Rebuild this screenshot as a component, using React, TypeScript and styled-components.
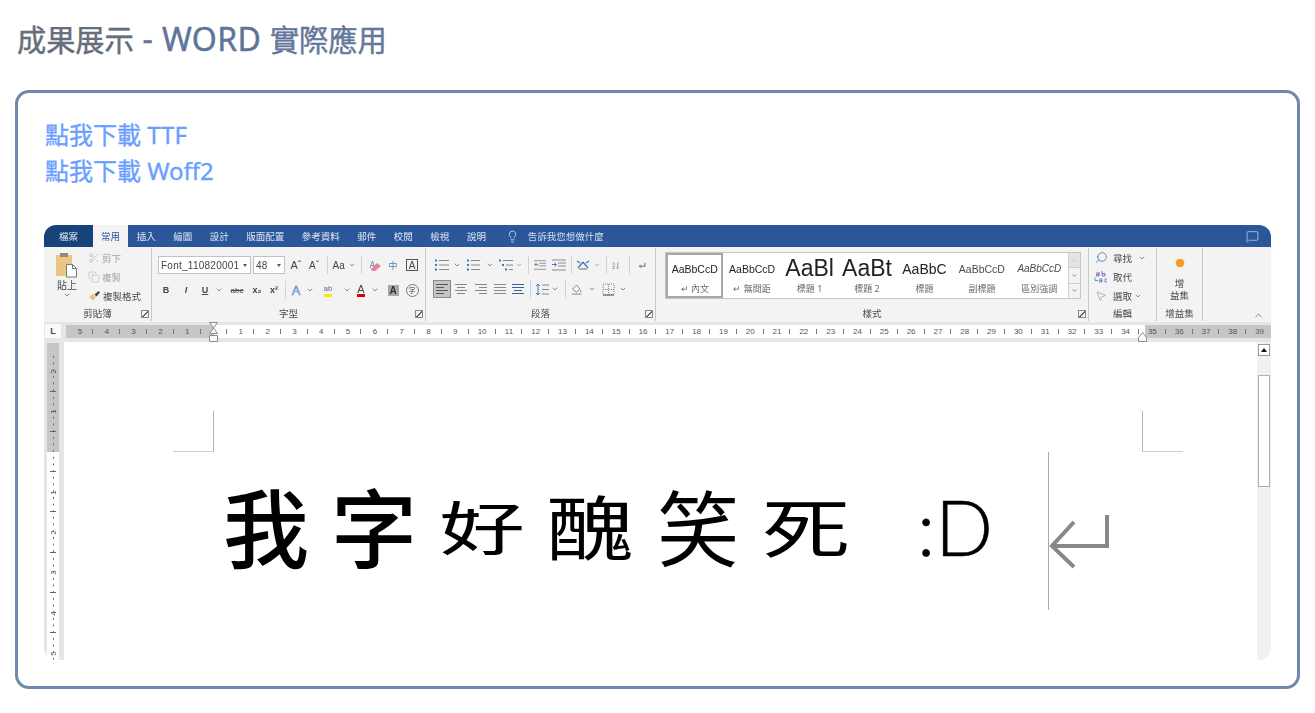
import React from 'react';
import styled, { createGlobalStyle } from 'styled-components';
import { ChevronDown, ChevronUp, Lightbulb, MessageSquare, Scissors, Copy, Search, MousePointer2 } from 'lucide-react';

const cjk = '"Noto Sans", "Noto Sans CJK TC", sans-serif';

const GlobalStyle = createGlobalStyle`
  html, body {
    margin: 0;
    background: #fff;
    font-family: ${cjk};
  }
`;

const Page = styled.div`
  padding: 20px 15px 0;
  box-sizing: border-box;
  height: 713px;
  overflow: hidden;
`;

const Heading = styled.h2`
  margin: 0 0 30px 2px;
  height: 40px;
  font-size: 29.2px;
  line-height: 38px;
  font-weight: 400;
  white-space: nowrap;
  -webkit-text-stroke: 0.45px currentColor;
`;

const HeadingPart = styled.span<{ $color: string; $latin?: boolean }>`
  color: ${p => p.$color};
  font-size: ${p => (p.$latin ? '32px' : 'inherit')};
  letter-spacing: ${p => (p.$latin ? '0.4px' : '0')};
`;

const Card = styled.section`
  box-sizing: border-box;
  height: 599px;
  border: 3px solid #7088ab;
  border-radius: 14px;
  padding: 24px 26px 26px;
  display: flex;
  flex-direction: column;
`;

const DownloadLink = styled.a`
  display: block;
  margin-left: 1px;
  font-size: 24px;
  line-height: 36px;
  font-weight: 400;
  color: #6a9eff;
  -webkit-text-stroke: 0.35px currentColor;
  text-decoration: none;
`;

const Shot = styled.div`
  margin-top: 36px;
  height: 435px;
  border-radius: 12px;
  overflow: hidden;
  display: flex;
  flex-direction: column;
  font-size: 9.5px;
  color: #4a4a4a;
  background: #fff;
`;

const TabBar = styled.div`
  flex: 0 0 22px;
  display: flex;
  align-items: center;
  background: #2b579a;
  color: #dfe7f2;
  white-space: nowrap;
  filter: blur(0.25px);
`;

const Tab = styled.span<{ $kind?: 'file' | 'active' }>`
  height: 100%;
  display: flex;
  align-items: center;
  justify-content: center;
  padding: ${p => (p.$kind ? '0' : '0 8.75px')};
  box-sizing: border-box;
  flex: 0 0 auto;
  width: ${p => (p.$kind === 'file' ? '49px' : p.$kind === 'active' ? '35px' : 'auto')};
  background: ${p => (p.$kind === 'file' ? '#17437b' : p.$kind === 'active' ? '#f3f3f3' : 'transparent')};
  color: ${p => (p.$kind === 'active' ? '#2b579a' : 'inherit')};
`;

const TellMe = styled.span`
  display: flex;
  align-items: center;
  gap: 9px;
  margin-left: 11px;
  color: #d5dfee;
`;

const CommentSlot = styled.span`
  margin-left: auto;
  margin-right: 12px;
  display: flex;
`;

const Ribbon = styled.div`
  flex: 0 0 75px;
  box-sizing: border-box;
  padding-top: 1px;
  display: flex;
  background: #f3f3f3;
  filter: blur(0.25px);
`;

const Group = styled.div<{ $w: number }>`
  flex: 0 0 ${p => p.$w}px;
  box-sizing: border-box;
  height: 73px;
  border-right: 1px solid #c8c8c8;
  display: flex;
  flex-direction: column;
`;

const GroupBody = styled.div<{ $pad?: number; $top?: number; $col?: boolean }>`
  flex: 0 0 59px;
  box-sizing: border-box;
  padding: ${p => p.$top ?? 0}px 0 0 ${p => p.$pad ?? 0}px;
  display: flex;
  flex-direction: ${p => (p.$col ? 'column' : 'row')};
`;

const GroupLabel = styled.div`
  flex: 0 0 14px;
  display: grid;
  grid-template-columns: 1fr auto 1fr;
  align-items: center;
  line-height: 14px;
`;

const Launcher = styled.span`
  grid-column: 3;
  justify-self: end;
  margin-right: 2px;
  width: 6px;
  height: 6px;
  border: 1px solid #8a8a8a;
  background: linear-gradient(135deg, transparent 45%, #666 45% 60%, transparent 60%);
`;

const PasteColumn = styled.div`
  flex: 0 0 44px;
  display: flex;
  flex-direction: column;
  align-items: center;
  padding: 4px 0 0 2px;
  box-sizing: border-box;
  line-height: 12px;
`;

const PasteLabel = styled.span`
  margin-top: 1px;
  font-size: 10px;
`;

const ClipColumn = styled.div`
  display: flex;
  flex-direction: column;
`;

const ClipRow = styled.div<{ $muted?: boolean }>`
  height: 19px;
  display: flex;
  align-items: center;
  gap: 2px;
  color: ${p => (p.$muted ? '#a5a5a5' : 'inherit')};
`;

const ToolRow = styled.div<{ $mt?: number }>`
  height: 18px;
  margin-top: ${p => p.$mt ?? 0}px;
  display: flex;
  align-items: center;
`;

const Cell = styled.span<{ $w: number; $size?: number; $bold?: boolean; $italic?: boolean; $color?: string; $active?: boolean }>`
  flex: 0 0 ${p => p.$w}px;
  width: ${p => p.$w}px;
  height: 18px;
  box-sizing: border-box;
  display: flex;
  align-items: center;
  justify-content: center;
  font-family: "Liberation Sans", "Noto Sans CJK TC", sans-serif;
  font-size: ${p => p.$size ?? 10}px;
  font-weight: ${p => (p.$bold ? 700 : 400)};
  font-style: ${p => (p.$italic ? 'italic' : 'normal')};
  color: ${p => p.$color ?? '#444'};
  background: ${p => (p.$active ? '#c6c6c6' : 'transparent')};
  border: ${p => (p.$active ? '1px solid #8a8a8a' : 'none')};
`;

const Sep = styled.span<{ $w: number }>`
  flex: 0 0 ${p => p.$w}px;
  height: 18px;
  display: flex;
  justify-content: center;
  &::before {
    content: '';
    width: 1px;
    height: 100%;
    background: #d4d4d4;
  }
`;

const ComboBox = styled.span<{ $w: number; $ml?: number }>`
  flex: 0 0 ${p => p.$w}px;
  height: 18px;
  margin-left: ${p => p.$ml ?? 0}px;
  box-sizing: border-box;
  padding: 0 3px 0 2px;
  display: flex;
  align-items: center;
  justify-content: space-between;
  background: #fff;
  border: 1px solid #c2c2c2;
  font-family: "Liberation Sans", sans-serif;
  font-size: 10px;
  letter-spacing: 0.25px;
  color: #444;
  overflow: hidden;
`;

const CaretDown = styled.span`
  border: 2.5px solid transparent;
  border-top: 3px solid #555;
  border-bottom: 0;
`;

const UnderBar = styled.span<{ $color: string }>`
  line-height: 10px;
  border-bottom: 3px solid ${p => p.$color};
`;

const Boxed = styled.span`
  width: 12px;
  height: 12px;
  box-sizing: border-box;
  border: 1px solid #555;
  display: flex;
  align-items: center;
  justify-content: center;
  font-size: 10px;
`;

const Shaded = styled.span`
  width: 11px;
  height: 11px;
  background: #a8a8a8;
  display: flex;
  align-items: center;
  justify-content: center;
  font-weight: 700;
  color: #333;
`;

const Circled = styled.span`
  width: 11px;
  height: 11px;
  border: 1px solid #777;
  border-radius: 50%;
  display: flex;
  align-items: center;
  justify-content: center;
  font-size: 7px;
`;

const OutlinedA = styled.span`
  font-size: 13px;
  color: #e6eefa;
  -webkit-text-stroke: 0.6px #4a7fc0;
`;

const Gallery = styled.div`
  margin: 4px 0 0 9px;
  width: 416px;
  height: 47px;
  box-sizing: border-box;
  display: flex;
  background: #fff;
  border: 1px solid #c6c6c6;
`;

const StyleTile = styled.div<{ $selected?: boolean }>`
  flex: 0 0 57.45px;
  box-sizing: border-box;
  display: flex;
  flex-direction: column;
  align-items: center;
  border: ${p => (p.$selected ? '2px solid #a8a8a8' : '2px solid transparent')};
`;

const Preview = styled.div<{ $size: number; $italic?: boolean; $light?: boolean }>`
  height: 27px;
  white-space: nowrap;
  display: flex;
  align-items: center;
  font-family: "Liberation Sans", sans-serif;
  font-size: ${p => p.$size}px;
  font-style: ${p => (p.$italic ? 'italic' : 'normal')};
  color: ${p => (p.$light ? '#4a4a4a' : '#222')};
`;

const Caption = styled.div`
  font-size: 9px;
  line-height: 13px;
  color: #6a6a6a;
  white-space: nowrap;
`;

const GalleryScroll = styled.div`
  flex: 1;
  display: flex;
  flex-direction: column;
  border-left: 1px solid #d0d0d0;
  background: #f3f3f3;
`;

const GalleryButton = styled.span<{ $off?: boolean }>`
  flex: 1;
  display: flex;
  align-items: center;
  justify-content: center;
  color: ${p => (p.$off ? '#bdbdbd' : '#555')};
  background: ${p => (p.$off ? '#e4e4e4' : 'transparent')};
  & + & {
    border-top: 1px solid #d0d0d0;
  }
`;

const EditRow = styled.div`
  height: 19px;
  display: flex;
  align-items: center;
`;

const AddinBody = styled.div`
  display: flex;
  flex-direction: column;
  align-items: center;
  padding-top: 11px;
  line-height: 12px;
`;

const OrangeDot = styled.span`
  width: 8px;
  height: 8px;
  margin-bottom: 11px;
  border-radius: 50%;
  background: #f59a23;
  box-shadow: 0 0 2px #f8c070;
`;

const CollapseSlot = styled.span`
  margin-left: auto;
  margin-right: 7px;
  align-self: flex-end;
  margin-bottom: 1px;
  display: flex;
`;

const RulerBand = styled.div`
  flex: 0 0 20px;
  box-sizing: border-box;
  position: relative;
  display: flex;
  align-items: flex-start;
  background: #e6e6e6;
  padding-top: 3px;
  filter: blur(0.25px);
`;

const CornerBox = styled.span`
  flex: 0 0 16px;
  height: 14px;
  margin: -1px 5px 0 1px;
  background: #fafafa;
  display: flex;
  align-items: center;
  justify-content: center;
  font-family: "Liberation Sans", sans-serif;
  font-size: 9px;
  font-weight: 700;
`;

const RulerPart = styled.div<{ $w: number; $gray?: boolean; $end?: boolean }>`
  flex: 0 0 ${p => p.$w}px;
  height: 13px;
  display: flex;
  justify-content: ${p => (p.$end ? 'flex-end' : 'flex-start')};
  overflow: hidden;
  background: ${p => (p.$gray ? '#c6c6c6' : '#fff')};
`;

const RulerCell = styled.span<{ $half?: boolean }>`
  flex: 0 0 ${p => (p.$half ? 13.41 : 26.82)}px;
  height: 13px;
  position: relative;
  display: flex;
  align-items: center;
  justify-content: center;
  font-family: "Liberation Sans", sans-serif;
  font-size: 8px;
  color: #555;
  opacity: 0.99;
  &::after {
    content: '';
    position: absolute;
    right: 0;
    top: 4px;
    width: 1px;
    height: 5px;
    background: #777;
  }
`;

const IndentMarker = styled.svg<{ $x: number; $y: number }>`
  position: absolute;
  left: ${p => p.$x}px;
  top: ${p => p.$y}px;
`;

const Workspace = styled.div`
  flex: 1;
  min-height: 0;
  display: flex;
`;

const VRuler = styled.div`
  flex: 0 0 20px;
  box-sizing: border-box;
  padding: 1px 5px 0 3px;
  display: flex;
  flex-direction: column;
  background: #e6e6e6;
  filter: blur(0.25px);
`;

const VPart = styled.div<{ $gray?: boolean }>`
  flex: ${p => (p.$gray ? '0 0 109px' : '1')};
  min-height: 0;
  overflow: hidden;
  display: flex;
  flex-direction: column;
  justify-content: ${p => (p.$gray ? 'flex-end' : 'flex-start')};
  background-color: ${p => (p.$gray ? '#c6c6c6' : '#fff')};
`;

const VCell = styled.span<{ $half?: boolean; $noTick?: boolean }>`
  flex: 0 0 ${p => (p.$half ? 20.15 : 40.3)}px;
  position: relative;
  display: flex;
  align-items: center;
  justify-content: center;
  background-image: linear-gradient(to bottom, transparent 5px, #666 5px);
  background-size: 1px 6.7px;
  background-repeat: repeat-y;
  background-position: center top;
  font-family: "Liberation Sans", sans-serif;
  font-size: 8px;
  color: #555;
  &::after {
    content: '';
    display: ${p => (p.$noTick ? 'none' : 'block')};
    position: absolute;
    left: 3px;
    right: 3px;
    bottom: 0;
    height: 1px;
    background: #666;
  }
`;

const VNumber = styled.span`
  display: block;
  transform: rotate(-90deg);
`;

const Doc = styled.main`
  flex: 1;
  min-width: 0;
  padding-top: 69px;
  background: #fff;
`;

const MarkRow = styled.div`
  display: flex;
  justify-content: space-between;
  padding: 0 74px 0 109px;
`;

const CropMark = styled.span<{ $side: 'left' | 'right' }>`
  width: 40px;
  height: 40px;
  border-bottom: 1px solid #cfcfcf;
  border-${p => p.$side}: 1px solid #b5b5b5;
`;

const TextLine = styled.div`
  height: 158px;
  padding-left: 148px;
  display: flex;
  align-items: center;
`;

const Hand = styled.span<{ $size: number; $sy?: number; $weight?: number; $dy?: number }>`
  flex: 0 0 108px;
  text-align: center;
  font-family: "Noto Sans CJK TC", sans-serif;
  font-size: ${p => p.$size}px;
  font-weight: ${p => p.$weight ?? 400};
  line-height: 1;
  color: #000;
  transform: translateY(${p => p.$dy ?? -6}px) scaleY(${p => p.$sy ?? 1});
`;

const Smiley = styled.span`
  flex: 0 0 131px;
  margin-left: 57px;
  font-family: "Lato", "Noto Sans", sans-serif;
  font-weight: 300;
  font-size: 76px;
  line-height: 1;
  color: #000;
  -webkit-text-stroke: 0.6px #000;
  white-space: nowrap;
  transform: translateY(-4px);
`;

const EndMark = styled.span`
  height: 158px;
  box-sizing: border-box;
  padding-top: 20px;
  display: flex;
  align-items: center;
  border-left: 1px solid #aaa;
`;

const ScrollTrack = styled.div`
  flex: 0 0 14px;
  display: flex;
  flex-direction: column;
  align-items: center;
  padding-top: 2px;
  background: #f1f1f1;
`;

const ScrollUp = styled.span`
  width: 12px;
  height: 12px;
  box-sizing: border-box;
  background: #fff;
  border: 1px solid #999;
  display: flex;
  align-items: center;
  justify-content: center;
  &::before {
    content: '';
    border: 3px solid transparent;
    border-top: 0;
    border-bottom: 4px solid #111;
  }
`;

const ScrollThumb = styled.span`
  margin-top: 19px;
  width: 12px;
  height: 112px;
  box-sizing: border-box;
  background: #fff;
  border: 1px solid #b0b0b0;
`;

const Chev: React.FC<{ size?: number }> = ({ size = 8 }) => <ChevronDown size={size} strokeWidth={2} color="#555" />;

// gray lines with coloured bullets in front, for the list and alignment buttons
const Lines: React.FC<{ rows: [number, number][]; dots?: string; stroke?: string }> = ({ rows, dots, stroke = '#888' }) => (
  <svg width="14" height="12" viewBox="0 0 14 12">
    {rows.map(([x, w], i) => {
      const y = 1.5 + (i * 9) / (rows.length - 1);
      return (
        <g key={i}>
          <line x1={x} x2={x + w} y1={y} y2={y} stroke={stroke} strokeWidth="1" />
          {dots && <rect x={Math.max(x - 4, 0)} y={y - 1} width="2" height="2" fill={dots} />}
        </g>
      );
    })}
  </svg>
);

const ClipboardIcon = () => (
  <svg width="24" height="26" viewBox="0 0 24 26">
    <rect x="1" y="3" width="16" height="21" fill="#ecc580" />
    <rect x="5" y="1" width="8" height="4" fill="#8a8a8a" />
    <path d="M11.5 12.5h6l4 4v8.5h-10z" fill="#fff" stroke="#777" />
    <path d="M17.5 12.5v4h4" fill="none" stroke="#777" />
  </svg>
);

const BrushIcon = () => (
  <svg width="13" height="11" viewBox="0 0 13 11">
    <path d="M1 7l4-3 3 3-3 3.5z" fill="#e7c27a" />
    <path d="M6.5 4.5l4-3.5 1.5 1.5-3.5 4z" fill="#444" />
  </svg>
);

const EraserIcon = () => (
  <svg width="14" height="13" viewBox="0 0 14 13">
    <path d="M3 9l2.500-7 2.500 7M4 6.500h3" fill="none" stroke="#5b7fb8" strokeWidth="0.8" />
    <path d="M4 10l6-6 4 3-6 5H5z" fill="#ec7d9b" />
  </svg>
);

const BucketIcon = () => (
  <svg width="15" height="15" viewBox="0 0 15 15">
    <path d="M2 7l5-5 4 5-4 4z" fill="#fff" stroke="#666" />
    <path d="M12 8c1 1.500 1.500 2 .5 3-1-.5-1-1.500-.5-3z" fill="#666" />
    <rect x="1" y="12.500" width="12" height="1.500" fill="#999" />
  </svg>
);

const BorderIcon = () => (
  <svg width="13" height="13" viewBox="0 0 13 13">
    <path d="M1 1h11v11H1zM6.500 1v11M1 6.500h11" fill="none" stroke="#888" strokeDasharray="1 1" />
    <line x1="1" x2="12" y1="12" y2="12" stroke="#555" />
  </svg>
);

const SpacingIcon = () => (
  <svg width="15" height="13" viewBox="0 0 15 13">
    <path d="M3 1v11M1 3l2-2 2 2M1 10l2 2 2-2" fill="none" stroke="#3d78bd" />
    <path d="M7 2h7M7 6.500h7M7 11h7" stroke="#888" />
  </svg>
);

const IndentIcon: React.FC<{ flip?: boolean }> = ({ flip }) => (
  <svg width="14" height="12" viewBox="0 0 14 12">
    <path d="M0 1h14M6 4h8M6 7h8M0 11h14" stroke="#888" />
    <path d={flip ? 'M0 5.500h4M2.500 3.500l2 2-2 2' : 'M1 5.500h4M3 3.500l-2 2 2 2'} fill="none" stroke="#3d78bd" />
  </svg>
);

const ClearIcon = () => (
  <svg width="16" height="12" viewBox="0 0 16 12">
    <path d="M8 3L3 9M8 3l5 6M2 2l3 2M14 2l-3 2" fill="none" stroke="#3d78bd" strokeWidth="1.300" />
    <path d="M4 10h8" stroke="#666" />
  </svg>
);

const SortIcon = () => (
  <svg width="14" height="13" viewBox="0 0 14 13">
    <path d="M1 6l2-5 2 5" fill="none" stroke="#3d78bd" strokeWidth="0.8" />
    <path d="M1 8h4l-4 4h4" fill="none" stroke="#555" strokeWidth="0.8" />
    <path d="M10 1v11M8 10l2 2 2-2" fill="none" stroke="#666" />
  </svg>
);

const PilcrowIcon = () => (
  <svg width="11" height="9" viewBox="0 0 11 9">
    <path d="M9.500 1v4.500H2M4 3.500l-2 2 2 2" fill="none" stroke="#555" strokeWidth="1.200" />
  </svg>
);

const ReplaceIcon = () => (
  <svg width="15" height="14" viewBox="0 0 15 14">
    <path d="M2 3h4M5 3v3H2.500V4.500H5M8 1v5h3V3.500H8" fill="none" stroke="#6b57a8" strokeWidth="0.8" />
    <path d="M1 7.500v3h3M5 9h3v3H5.500v-1.500H8M13 9h-2v3h2" fill="none" stroke="#3d78bd" strokeWidth="0.8" />
  </svg>
);

const fontRowOne = (
  <ToolRow>
    <ComboBox $w={93}>Font_110820001<CaretDown /></ComboBox>
    <ComboBox $w={32} $ml={2}>48<CaretDown /></ComboBox>
    <Cell $w={2} />
    <Cell $w={18} $size={11}>Aˆ</Cell>
    <Cell $w={18} $size={10}>Aˇ</Cell>
    <Sep $w={8} />
    <Cell $w={26} $size={10}>Aa&nbsp;<Chev /></Cell>
    <Sep $w={8} />
    <Cell $w={18}><EraserIcon /></Cell>
    <Cell $w={20} $color="#4f7fbd" $size={9}>中</Cell>
    <Cell $w={18}><Boxed>A</Boxed></Cell>
  </ToolRow>
);

const fontRowTwo = (
  <ToolRow $mt={7}>
    <Cell $w={16} $bold $size={9}>B</Cell>
    <Cell $w={24} $italic $size={9} $bold>I</Cell>
    <Cell $w={14} $bold $size={9}><u>U</u></Cell>
    <Cell $w={14}><Chev /></Cell>
    <Cell $w={22} $size={8}><s>abc</s></Cell>
    <Cell $w={18} $bold $size={9}>x₂</Cell>
    <Cell $w={16} $bold $size={9}>x²</Cell>
    <Sep $w={6} />
    <Cell $w={16}><OutlinedA>A</OutlinedA></Cell>
    <Cell $w={12}><Chev /></Cell>
    <Cell $w={24} $size={8} $color="#6b57a8"><UnderBar $color="#ffe600">ab</UnderBar></Cell>
    <Cell $w={14}><Chev /></Cell>
    <Cell $w={14} $size={11}><UnderBar $color="#e00000">A</UnderBar></Cell>
    <Cell $w={14}><Chev /></Cell>
    <Cell $w={22}><Shaded>A</Shaded></Cell>
    <Cell $w={16}><Circled>字</Circled></Cell>
  </ToolRow>
);

const paragraphRowOne = (
  <ToolRow>
    <Cell $w={18}><Lines dots="#3d78bd" rows={[[4, 10], [4, 10], [4, 10]]} /></Cell>
    <Cell $w={12}><Chev /></Cell>
    <Cell $w={20}><Lines dots="#3d78bd" rows={[[5, 9], [5, 9], [5, 9]]} /></Cell>
    <Cell $w={13}><Chev /></Cell>
    <Cell $w={20}><Lines dots="#3d78bd" rows={[[4, 10], [7, 7], [10, 4]]} /></Cell>
    <Cell $w={6}><Chev /></Cell>
    <Sep $w={12} />
    <Cell $w={12}><IndentIcon /></Cell>
    <Cell $w={25}><IndentIcon flip /></Cell>
    <Sep $w={1} />
    <Cell $w={22}><ClearIcon /></Cell>
    <Cell $w={6}><Chev /></Cell>
    <Sep $w={12} />
    <Cell $w={8}><SortIcon /></Cell>
    <Sep $w={18} />
    <Cell $w={8}><PilcrowIcon /></Cell>
  </ToolRow>
);

const paragraphRowTwo = (
  <ToolRow $mt={6}>
    <Cell $w={18} $active><Lines stroke="#555" rows={[[1, 12], [1, 8], [1, 12], [1, 8]]} /></Cell>
    <Cell $w={20}><Lines rows={[[1, 12], [3, 8], [1, 12], [3, 8]]} /></Cell>
    <Cell $w={20}><Lines rows={[[1, 12], [5, 8], [1, 12], [5, 8]]} /></Cell>
    <Cell $w={18}><Lines rows={[[1, 12], [1, 12], [1, 12], [1, 12]]} /></Cell>
    <Cell $w={18}><Lines stroke="#3d5f9a" rows={[[1, 12], [1, 12], [3, 8], [1, 12]]} /></Cell>
    <Sep $w={6} />
    <Cell $w={18}><SpacingIcon /></Cell>
    <Cell $w={8}><Chev /></Cell>
    <Sep $w={12} />
    <Cell $w={12}><BucketIcon /></Cell>
    <Cell $w={18}><Chev /></Cell>
    <Cell $w={14}><BorderIcon /></Cell>
    <Cell $w={16}><Chev /></Cell>
  </ToolRow>
);

const styleTiles = [
  { sample: 'AaBbCcD', size: 10.5, caption: '↵ 內文', selected: true },
  { sample: 'AaBbCcD', size: 10.5, caption: '↵ 無間距' },
  { sample: 'AaBl', size: 23, caption: '標題 1' },
  { sample: 'AaBt', size: 23, caption: '標題 2' },
  { sample: 'AaBbC', size: 14, caption: '標題' },
  { sample: 'AaBbCcD', size: 10.5, caption: '副標題', light: true },
  { sample: 'AaBbCcD', size: 10, caption: '區別強調', italic: true, light: true },
];

const rulerNumbers = Array.from({ length: 34 }, (_, i) => i + 1);

const App: React.FC = () => (
  <Page>
    <GlobalStyle />
    <Heading>
      <HeadingPart $color="#666e7b">成果展示</HeadingPart>
      <HeadingPart $color="#5d7598" $latin> - WORD </HeadingPart>
      <HeadingPart $color="#64789a">實際應用</HeadingPart>
    </Heading>
    <Card>
      <DownloadLink href="#">點我下載 TTF</DownloadLink>
      <DownloadLink href="#">點我下載 Woff2</DownloadLink>
      <Shot>
        <TabBar>
          <Tab $kind="file">檔案</Tab>
          <Tab $kind="active">常用</Tab>
          {['插入', '繪圖', '設計', '版面配置', '參考資料', '郵件', '校閱', '檢視', '說明'].map(t => (
            <Tab key={t}>{t}</Tab>
          ))}
          <TellMe>
            <Lightbulb size={13} strokeWidth={1.2} color="#fff" />
            告訴我您想做什麼
          </TellMe>
          <CommentSlot><MessageSquare size={13} strokeWidth={1} color="#fff" /></CommentSlot>
        </TabBar>

        <Ribbon>
          <Group $w={108}>
            <GroupBody>
              <PasteColumn>
                <ClipboardIcon />
                <PasteLabel>貼上</PasteLabel>
                <Chev />
              </PasteColumn>
              <ClipColumn>
                <ClipRow $muted><Scissors size={12} strokeWidth={1} />剪下</ClipRow>
                <ClipRow $muted><Copy size={12} strokeWidth={1} />複製</ClipRow>
                <ClipRow><BrushIcon />複製格式</ClipRow>
              </ClipColumn>
            </GroupBody>
            <GroupLabel>
              <span />
              <span>剪貼簿</span>
              <Launcher />
            </GroupLabel>
          </Group>

          <Group $w={274}>
            <GroupBody $col $pad={6} $top={8}>
              {fontRowOne}
              {fontRowTwo}
            </GroupBody>
            <GroupLabel>
              <span />
              <span>字型</span>
              <Launcher />
            </GroupLabel>
          </Group>

          <Group $w={230}>
            <GroupBody $col $pad={7} $top={8}>
              {paragraphRowOne}
              {paragraphRowTwo}
            </GroupBody>
            <GroupLabel>
              <span />
              <span>段落</span>
              <Launcher />
            </GroupLabel>
          </Group>

          <Group $w={433}>
            <GroupBody>
              <Gallery>
                {styleTiles.map(t => (
                  <StyleTile key={t.caption} $selected={t.selected}>
                    <Preview $size={t.size} $italic={t.italic} $light={t.light}>{t.sample}</Preview>
                    <Caption>{t.caption}</Caption>
                  </StyleTile>
                ))}
                <GalleryScroll>
                  <GalleryButton $off><ChevronUp size={7} /></GalleryButton>
                  <GalleryButton><ChevronDown size={7} /></GalleryButton>
                  <GalleryButton><ChevronDown size={7} /></GalleryButton>
                </GalleryScroll>
              </Gallery>
            </GroupBody>
            <GroupLabel>
              <span />
              <span>樣式</span>
              <Launcher />
            </GroupLabel>
          </Group>

          <Group $w={68}>
            <GroupBody $col>
              <EditRow>
                <Cell $w={24}><Search size={13} strokeWidth={1.5} color="#3d78bd" style={{ transform: 'scaleX(-1)' }} /></Cell>
                <span>尋找</span>
                <Cell $w={20}><Chev /></Cell>
              </EditRow>
              <EditRow>
                <Cell $w={24}><ReplaceIcon /></Cell>
                <span>取代</span>
              </EditRow>
              <EditRow>
                <Cell $w={24}><MousePointer2 size={12} strokeWidth={1} color="#777" /></Cell>
                <span>選取</span>
                <Cell $w={12}><Chev /></Cell>
              </EditRow>
            </GroupBody>
            <GroupLabel>
              <span />
              <span>編輯</span>
            </GroupLabel>
          </Group>

          <Group $w={46}>
            <GroupBody $col>
              <AddinBody>
                <OrangeDot />
                <span>增</span>
                <span>益集</span>
              </AddinBody>
            </GroupBody>
            <GroupLabel>
              <span />
              <span>增益集</span>
            </GroupLabel>
          </Group>

          <CollapseSlot><ChevronUp size={11} strokeWidth={1.5} color="#555" /></CollapseSlot>
        </Ribbon>

        <RulerBand>
          <CornerBox>L</CornerBox>
          <RulerPart $w={148} $gray $end>
            {[5, 4, 3, 2, 1].map(n => <RulerCell key={n}>{n}</RulerCell>)}
            <RulerCell $half />
          </RulerPart>
          <RulerPart $w={931}>
            <RulerCell $half />
            {rulerNumbers.map(n => <RulerCell key={n}>{n}</RulerCell>)}
          </RulerPart>
          <RulerPart $w={128} $gray $end>
            {[35, 36, 37, 38, 39].map(n => <RulerCell key={n}>{n}</RulerCell>)}
          </RulerPart>
          <IndentMarker $x={165} $y={0} width="9" height="21" viewBox="0 0 9 21">
            <path d="M.5.5h8L4.500 6zM4.500 6l4 5.500h-8zM.5 13.500h8v6h-8z" fill="#fafafa" stroke="#8a8a8a" />
          </IndentMarker>
          <IndentMarker $x={1094} $y={10} width="9" height="10" viewBox="0 0 9 10">
            <path d="M4.500.5l4 5v4h-8v-4z" fill="#fafafa" stroke="#8a8a8a" />
          </IndentMarker>
        </RulerBand>

        <Workspace>
          <VRuler>
            <VPart $gray>
              <VCell><VNumber>2</VNumber></VCell>
              <VCell><VNumber>1</VNumber></VCell>
              <VCell $half $noTick />
            </VPart>
            <VPart>
              <VCell $half />
              {[1, 2, 3, 4, 5].map(n => <VCell key={n}><VNumber>{n}</VNumber></VCell>)}
            </VPart>
          </VRuler>
          <Doc>
            <MarkRow>
              <CropMark $side="right" />
              <CropMark $side="left" />
            </MarkRow>
            <TextLine>
              <Hand $size={86} $weight={500}>我</Hand>
              <Hand $size={86} $weight={500}>字</Hand>
              <Hand $size={86} $sy={0.68}>好</Hand>
              <Hand $size={88} $sy={0.8}>醜</Hand>
              <Hand $size={82}>笑</Hand>
              <Hand $size={88} $sy={0.74}>死</Hand>
              <Smiley>:D</Smiley>
              <EndMark>
                <svg width="60" height="56" viewBox="0 0 60 56">
                  <path d="M58 2v31H3M25 9L3 33l22 21" fill="none" stroke="#888" strokeWidth="4" />
                </svg>
              </EndMark>
            </TextLine>
          </Doc>
          <ScrollTrack>
            <ScrollUp />
            <ScrollThumb />
          </ScrollTrack>
        </Workspace>
      </Shot>
    </Card>
  </Page>
);

export default App;
